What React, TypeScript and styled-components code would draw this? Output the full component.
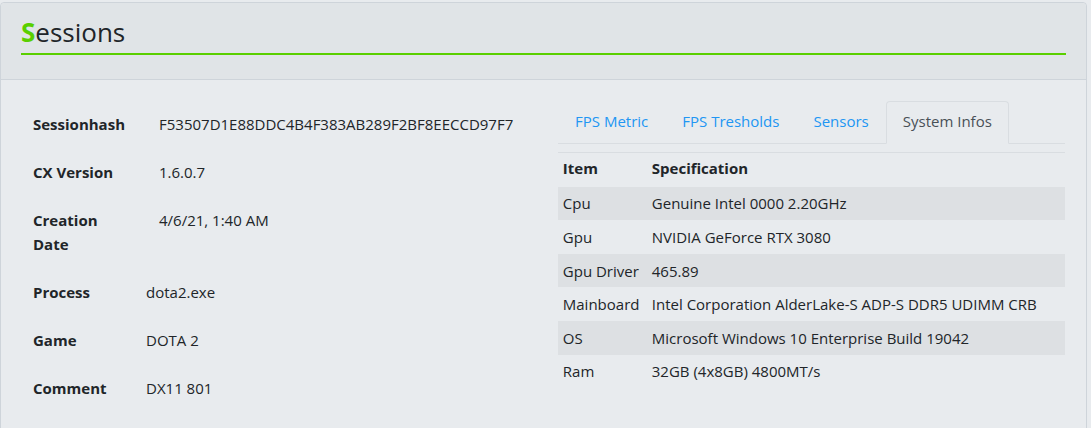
import React from "react";
import styled, { createGlobalStyle } from "styled-components";

const GlobalStyle = createGlobalStyle`
  html, body {
    margin: 0;
    padding: 0;
    background: #e8ebee;
  }
  body {
    font-family: "Open Sans", "Noto Sans", sans-serif;
    font-size: 15px;
    line-height: 24px;
    color: #212529;
  }
  * { box-sizing: border-box; }
`;

const Card = styled.section`
  margin-top: 2px;
  width: 1087px;
  border: 1px solid #ced4da;
  border-radius: 4px 4px 0 0;
  background: #e8ebee;
  min-height: 440px;
`;

const CardHeader = styled.header`
  background: #e0e4e7;
  border-bottom: 1px solid #ced4da;
  padding: 12px 20px 24px 20px;
  border-radius: 4px 4px 0 0;
`;

const Title = styled.h3`
  margin: 0;
  font-size: 26px;
  font-weight: 400;
  line-height: 34px;
  padding-bottom: 4px;
  border-bottom: 2px solid #5acf00;
  color: #212529;
`;

const Accent = styled.span`
  color: #5acf00;
  font-weight: 700;
`;

const CardBody = styled.div`
  display: grid;
  grid-template-columns: 519px 507px;
  column-gap: 18px;
  padding: 20px 20px;
`;

const InfoColumn = styled.div`
  display: flex;
  flex-direction: column;
`;

const InfoTable = styled.table`
  border-collapse: collapse;
  width: 100%;
`;

const InfoLabel = styled.th<{ $width: number }>`
  width: ${(p) => p.$width}px;
  text-align: left;
  vertical-align: top;
  font-weight: 700;
  padding: 12px 24px 12px 12px;
`;

const InfoValue = styled.td`
  vertical-align: top;
  padding: 12px 12px 12px 0;
`;

const TabNav = styled.nav`
  display: flex;
  border-bottom: 1px solid #d9dde1;
  margin-top: 1px;
`;

const Tab = styled.a<{ $active?: boolean }>`
  display: block;
  padding: 7px 16px 9px 16px;
  margin-bottom: -1px;
  border: 1px solid transparent;
  border-top-left-radius: 4px;
  border-top-right-radius: 4px;
  color: ${(p) => (p.$active ? "#495057" : "#2196f3")};
  background: ${(p) => (p.$active ? "#e8ebee" : "transparent")};
  border-color: ${(p) =>
    p.$active ? "#d9dde1 #d9dde1 #e8ebee" : "transparent"};
  text-decoration: none;
  cursor: pointer;
  line-height: 24px;
  height: 43px;
`;

const TabContent = styled.div`
  margin-top: 8px;
`;

const SpecTable = styled.table`
  width: 100%;
  border-collapse: collapse;
`;

const SpecHead = styled.th<{ $first?: boolean }>`
  text-align: left;
  font-weight: 700;
  padding: 2.6px 4.8px 7px 4.8px;
  border-top: 1px solid #d9dde1;
  width: ${(p) => (p.$first ? "89px" : "auto")};
`;

const SpecRow = styled.tr<{ $striped?: boolean }>`
  background: ${(p) => (p.$striped ? "#dde0e3" : "transparent")};
`;

const SpecCell = styled.td`
  padding: 4.8px;
  white-space: nowrap;
`;

const infoGroups: { labelWidth: number; rows: [string, string][] }[] = [
  {
    labelWidth: 138,
    rows: [
      ["Sessionhash", "F53507D1E88DDC4B4F383AB289F2BF8EECCD97F7"],
      ["CX Version", "1.6.0.7"],
      ["Creation Date", "4/6/21, 1:40 AM"],
    ],
  },
  {
    labelWidth: 125,
    rows: [
      ["Process", "dota2.exe"],
      ["Game", "DOTA 2"],
      ["Comment", "DX11 801"],
    ],
  },
];

const specs: [string, string][] = [
  ["Cpu", "Genuine Intel 0000 2.20GHz"],
  ["Gpu", "NVIDIA GeForce RTX 3080"],
  ["Gpu Driver", "465.89"],
  ["Mainboard", "Intel Corporation AlderLake-S ADP-S DDR5 UDIMM CRB"],
  ["OS", "Microsoft Windows 10 Enterprise Build 19042"],
  ["Ram", "32GB (4x8GB) 4800MT/s"],
];

const tabs = ["FPS Metric", "FPS Tresholds", "Sensors", "System Infos"];

export default function App() {
  return (
    <>
      <GlobalStyle />
      <Card>
        <CardHeader>
          <Title>
            <Accent>S</Accent>essions
          </Title>
        </CardHeader>
        <CardBody>
          <InfoColumn>
            {infoGroups.map((g, gi) => (
              <InfoTable key={gi}>
                <tbody>
                  {g.rows.map(([k, v]) => (
                    <tr key={k}>
                      <InfoLabel $width={g.labelWidth}>{k}</InfoLabel>
                      <InfoValue>{v}</InfoValue>
                    </tr>
                  ))}
                </tbody>
              </InfoTable>
            ))}
          </InfoColumn>
          <div>
            <TabNav>
              {tabs.map((t) => (
                <Tab key={t} $active={t === "System Infos"}>
                  {t}
                </Tab>
              ))}
            </TabNav>
            <TabContent>
              <SpecTable>
                <thead>
                  <tr>
                    <SpecHead $first>Item</SpecHead>
                    <SpecHead>Specification</SpecHead>
                  </tr>
                </thead>
                <tbody>
                  {specs.map(([k, v], i) => (
                    <SpecRow key={k} $striped={i % 2 === 0}>
                      <SpecCell>{k}</SpecCell>
                      <SpecCell>{v}</SpecCell>
                    </SpecRow>
                  ))}
                </tbody>
              </SpecTable>
            </TabContent>
          </div>
        </CardBody>
      </Card>
    </>
  );
}
